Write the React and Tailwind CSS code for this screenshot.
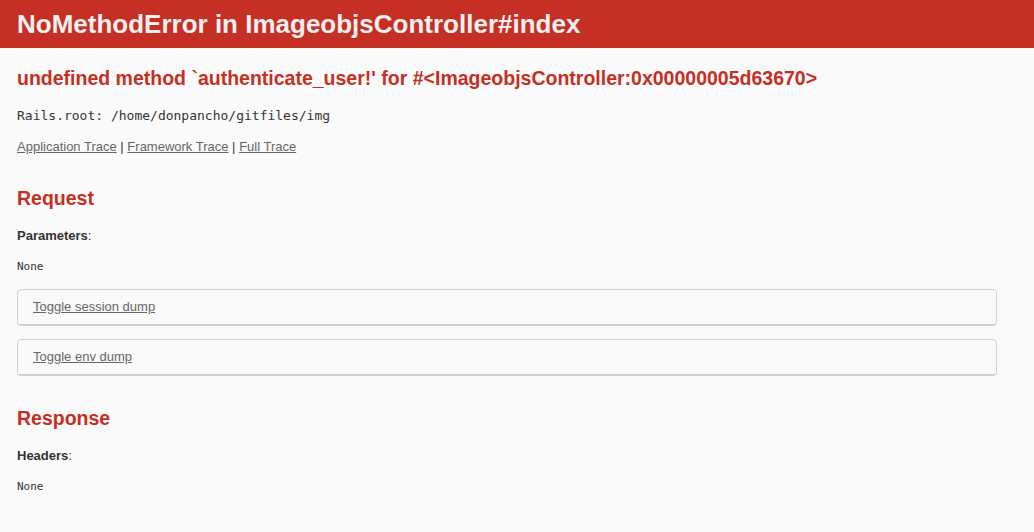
export default function App() {
  return (
    <div className="min-h-[532px] bg-[#FAFAFA] text-[#333] font-['Liberation_Sans',Arial,sans-serif] text-[13px] leading-[18px]">
      <header className="h-[48px] bg-[#C52F24] text-[#F0F0F0] px-[17px] flex items-center">
        <h1 className="text-[26px] leading-[28px] font-bold">NoMethodError in ImageobjsController#index</h1>
      </header>
      <div className="px-[17px]">
        <h2 className="mt-[17.5px] text-[19.5px] leading-[25px] font-bold text-[#C52F24]">
          undefined method `authenticate_user!' for #&lt;ImageobjsController:0x00000005d63670&gt;
        </h2>
        <p className="mt-[16.5px] font-['DejaVu_Sans_Mono',monospace] text-[13px] leading-[18px]">Rails.root: /home/donpancho/gitfiles/img</p>
        <p className="mt-[13px] leading-[18px]">
          <a href="#" className="text-[#666] underline">Application Trace</a> |{" "}
          <a href="#" className="text-[#666] underline">Framework Trace</a> |{" "}
          <a href="#" className="text-[#666] underline">Full Trace</a>
        </p>

        <h2 className="mt-[29.5px] text-[19.5px] leading-[25px] font-bold text-[#C52F24]">Request</h2>
        <p className="mt-[16.5px] leading-[18px]"><b>Parameters</b>:</p>
        <pre className="mt-[14.5px] font-['DejaVu_Sans_Mono',monospace] text-[11px] leading-[13px]">None</pre>

        <div className="mt-[16.5px] w-[980px] border border-[#D0D0D0] rounded-[4px]">
          <div className="h-[35px] px-[15px] flex items-center border-b border-[#D0D0D0]">
            <a href="#" className="text-[#666] underline">Toggle session dump</a>
          </div>
        </div>
        <div className="mt-[13px] w-[980px] border border-[#D0D0D0] rounded-[4px]">
          <div className="h-[35px] px-[15px] flex items-center border-b border-[#D0D0D0]">
            <a href="#" className="text-[#666] underline">Toggle env dump</a>
          </div>
        </div>

        <h2 className="mt-[29.5px] text-[19.5px] leading-[25px] font-bold text-[#C52F24]">Response</h2>
        <p className="mt-[16.5px] leading-[18px]"><b>Headers</b>:</p>
        <pre className="mt-[14.5px] font-['DejaVu_Sans_Mono',monospace] text-[11px] leading-[13px]">None</pre>
      </div>
    </div>
  );
}
